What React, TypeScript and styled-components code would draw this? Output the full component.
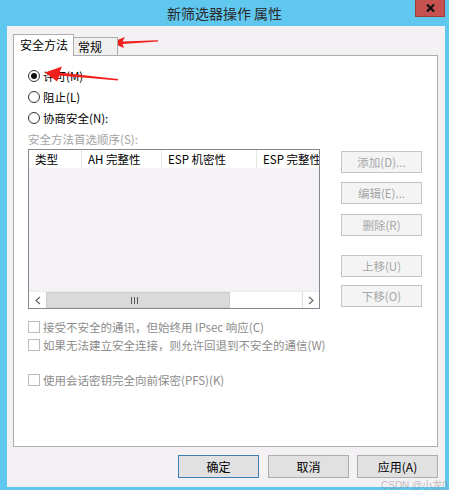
import React from "react";
import styled, { createGlobalStyle } from "styled-components";

const Global = createGlobalStyle`
  html, body { margin: 0; padding: 0; background: #60c7ef; }
  * { box-sizing: border-box; }
`;

const Frame = styled.div`
  position: relative;
  width: 449px;
  height: 490px;
  background: #60c7ef;
  display: flex;
  flex-direction: column;
  overflow: hidden;
  font-family: "Noto Sans CJK SC", "Noto Sans", sans-serif;
  font-size: 11.5px;
  color: #000;
`;

const TitleBar = styled.div`
  height: 26px;
  display: grid;
  grid-template-columns: 34px 1fr 34px;
  align-items: start;
`;

const Title = styled.div`
  grid-column: 2;
  text-align: center;
  line-height: 26px;
  font-size: 14px;
  color: #2a2a2a;
`;

const CloseButton = styled.div`
  width: 30px;
  height: 17px;
  background: #c75050;
  border: 1px solid #a33a3a;
  border-top: none;
  display: flex;
  align-items: center;
  justify-content: center;
`;

const Client = styled.div`
  flex: 1;
  margin: 0 4px 3px 7px;
  background: #f4f1f5;
  padding: 8px 7px 9px 6px;
  display: flex;
  flex-direction: column;
`;

const TabStrip = styled.div`
  display: flex;
  align-items: flex-end;
  height: 22px;
  margin-bottom: -1px;
  position: relative;
  z-index: 1;
`;

const Tab = styled.div<{ $active?: boolean }>`
  height: ${(p) => (p.$active ? 22 : 19)}px;
  width: ${(p) => (p.$active ? 61 : 45)}px;
  margin-left: ${(p) => (p.$active ? 0 : -1)}px;
  background: ${(p) => (p.$active ? "#fff" : "#f0f0f0")};
  border: 1px solid #adadad;
  border-bottom: ${(p) => (p.$active ? "none" : "1px solid #adadad")};
  position: relative;
  z-index: ${(p) => (p.$active ? 2 : 1)};
  padding-left: ${(p) => (p.$active ? 6 : 4)}px;
  line-height: ${(p) => (p.$active ? 20 : 17)}px;
  font-size: 12px;
  color: #000;
`;

const Panel = styled.div`
  height: 392px;
  background: #fff;
  border: 1px solid #adadad;
  padding: 9px 14px 0 14px;
  display: flex;
  flex-direction: column;
`;

const RadioRow = styled.label`
  height: 21px;
  display: flex;
  align-items: center;
  gap: 3px;
`;

const RadioDot = styled.span<{ $checked?: boolean }>`
  width: 12px;
  height: 12px;
  border-radius: 50%;
  border: 1px solid #333;
  background: #fff;
  display: flex;
  align-items: center;
  justify-content: center;
  &::after {
    content: "";
    width: 6px;
    height: 6px;
    border-radius: 50%;
    background: ${(p) => (p.$checked ? "#111" : "transparent")};
  }
`;

const SectionLabel = styled.div`
  margin-top: 3px;
  height: 16px;
  line-height: 16px;
  color: #a3a3a3;
`;

const ListRow = styled.div`
  margin-top: 2px;
  display: flex;
  gap: 21px;
`;

const ListBox = styled.div`
  width: 292px;
  height: 160px;
  border: 1px solid #828790;
  background: #f5f2f6;
  display: flex;
  flex-direction: column;
  overflow: hidden;
`;

const Header = styled.div`
  height: 18px;
  display: flex;
  background: #fff;
  flex-shrink: 0;
`;

const HeaderCell = styled.div<{ $w: number }>`
  width: ${(p) => p.$w}px;
  flex-shrink: 0;
  padding-left: 6px;
  line-height: 18px;
  border-right: 1px solid #e5e5e5;
  white-space: nowrap;
  overflow: hidden;
`;

const ListBody = styled.div`
  flex: 1;
`;

const HScroll = styled.div`
  height: 17px;
  display: flex;
  background: #fff;
  border-top: 1px solid #ececec;
`;

const ArrowBox = styled.div<{ $right?: boolean }>`
  width: 17px;
  display: flex;
  align-items: center;
  justify-content: center;
  border-left: ${(p) => (p.$right ? "1px solid #dcdcdc" : "none")};
`;

const Thumb = styled.div`
  width: 184px;
  background: #dadada;
  border: 1px solid #cdcdcd;
  display: flex;
  align-items: center;
  justify-content: center;
  padding-right: 8px;
`;

const Track = styled.div`
  flex: 1;
  background: #fff;
`;

const SideButtons = styled.div`
  margin-top: 2px;
  display: flex;
  flex-direction: column;
  gap: 9px;
`;

const SideButton = styled.div<{ $extra?: number }>`
  width: 81px;
  height: 22px;
  margin-top: ${(p) => p.$extra || 0}px;
  border: 1px solid #c4c4c4;
  background: #f4f4f4;
  color: #a6a6a6;
  display: flex;
  align-items: center;
  justify-content: center;
  font-size: 11.5px;
`;

const CheckRow = styled.div<{ $mt: number }>`
  margin-top: ${(p) => p.$mt}px;
  height: 18px;
  display: flex;
  align-items: center;
  gap: 3px;
  color: #8c8c8c;
`;

const CheckBox = styled.span`
  width: 12px;
  height: 12px;
  border: 1px solid #bcbcbc;
  background: #fff;
`;

const Footer = styled.div`
  margin-top: 8px;
  display: flex;
  justify-content: flex-end;
`;

const DialogButton = styled.div<{ $default?: boolean; $gap?: number }>`
  width: 81px;
  height: 23px;
  margin-left: ${(p) => p.$gap || 0}px;
  background: #e1e1e1;
  border: 1px solid ${(p) => (p.$default ? "#3c7fb1" : "#adadad")};
  display: flex;
  align-items: center;
  justify-content: center;
  font-size: 12px;
  color: #000;
`;

const Overlay = styled.svg`
  position: absolute;
  left: 0;
  top: 0;
  pointer-events: none;
`;

const Watermark = styled.div`
  position: absolute;
  left: 381px;
  top: 477px;
  font-size: 10px;
  color: rgba(140, 140, 140, 0.55);
  white-space: nowrap;
  font-family: "Liberation Sans", "Noto Sans CJK SC", sans-serif;
`;

const Chevron = ({ right }: { right?: boolean }) => (
  <svg width="6" height="9" viewBox="0 0 6 9">
    <path
      d={right ? "M1 1 L5 4.5 L1 8" : "M5 1 L1 4.5 L5 8"}
      fill="none"
      stroke="#606060"
      strokeWidth="1.1"
    />
  </svg>
);

const Grip = () => (
  <svg width="7" height="7" viewBox="0 0 7 7">
    <rect x="0" y="0" width="1" height="7" fill="#555" />
    <rect x="3" y="0" width="1" height="7" fill="#555" />
    <rect x="6" y="0" width="1" height="7" fill="#555" />
  </svg>
);

export default function App() {
  return (
    <>
      <Global />
      <Frame>
        <TitleBar>
          <Title>新筛选器操作 属性</Title>
          <CloseButton>
            <svg width="9" height="8" viewBox="0 0 9 8">
              <path d="M1 0.5 L8 7.5 M8 0.5 L1 7.5" stroke="#111" strokeWidth="2.2" />
            </svg>
          </CloseButton>
        </TitleBar>
        <Client>
          <TabStrip>
            <Tab $active>安全方法</Tab>
            <Tab>常规</Tab>
          </TabStrip>
          <Panel>
            <RadioRow>
              <RadioDot $checked />
              许可(M)
            </RadioRow>
            <RadioRow>
              <RadioDot />
              阻止(L)
            </RadioRow>
            <RadioRow>
              <RadioDot />
              协商安全(N):
            </RadioRow>
            <SectionLabel>安全方法首选顺序(S):</SectionLabel>
            <ListRow>
              <ListBox>
                <Header>
                  <HeaderCell $w={53}>类型</HeaderCell>
                  <HeaderCell $w={80}>AH 完整性</HeaderCell>
                  <HeaderCell $w={95}>ESP 机密性</HeaderCell>
                  <HeaderCell $w={80}>ESP 完整性</HeaderCell>
                </Header>
                <ListBody />
                <HScroll>
                  <ArrowBox>
                    <Chevron />
                  </ArrowBox>
                  <Thumb>
                    <Grip />
                  </Thumb>
                  <Track />
                  <ArrowBox $right>
                    <Chevron right />
                  </ArrowBox>
                </HScroll>
              </ListBox>
              <SideButtons>
                <SideButton>添加(D)...</SideButton>
                <SideButton>编辑(E)...</SideButton>
                <SideButton $extra={1}>删除(R)</SideButton>
                <SideButton $extra={10}>上移(U)</SideButton>
                <SideButton $extra={-1}>下移(O)</SideButton>
              </SideButtons>
            </ListRow>
            <CheckRow $mt={9}>
              <CheckBox />
              接受不安全的通讯，但始终用 IPsec 响应(C)
            </CheckRow>
            <CheckRow $mt={0}>
              <CheckBox />
              如果无法建立安全连接，则允许回退到不安全的通信(W)
            </CheckRow>
            <CheckRow $mt={17}>
              <CheckBox />
              使用会话密钥完全向前保密(PFS)(K)
            </CheckRow>
          </Panel>
          <Footer>
            <DialogButton $default>确定</DialogButton>
            <DialogButton $gap={9}>取消</DialogButton>
            <DialogButton $gap={8}>应用(A)</DialogButton>
          </Footer>
        </Client>
        <Overlay width="449" height="490" viewBox="0 0 449 490">
          <polygon
            points="111,42.5 125,37 122.5,41.5 158,40.2 158,41.6 122.5,44 124,48"
            fill="#f0201c"
          />
          <polygon
            points="45,72.5 62,66.5 59.5,72.5 118,79 118,80.6 59.5,75.5 57,81.5"
            fill="#f0201c"
          />
        </Overlay>
        <Watermark>CSDN @小龙0</Watermark>
      </Frame>
    </>
  );
}
